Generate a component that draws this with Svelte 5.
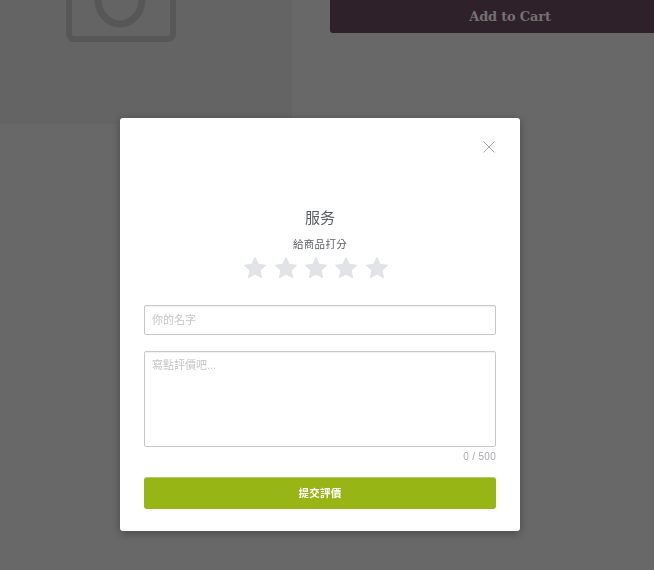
<script>
  const stars = [1, 2, 3, 4, 5];
</script>

<div class="page">
  <div class="left">
    <svg class="photo" width="110" height="44" viewBox="0 0 110 44" fill="none" stroke="#575757" stroke-width="6">
      <rect x="3" y="-32" width="104" height="71" rx="5" />
      <ellipse cx="54" cy="-1" rx="22" ry="25" stroke-width="7" />
    </svg>
  </div>
  <div class="right">
    <button class="cart" tabindex="-1">Add to Cart</button>
  </div>
</div>

<div class="overlay">
  <div class="modal">
    <div class="close-row">
      <svg width="12" height="12" viewBox="0 0 12 12" stroke="#a6a9ad" stroke-width="1" fill="none">
        <path d="M.5.5l11 11M11.5.5l-11 11" />
      </svg>
    </div>
    <h2>服务</h2>
    <p class="hint">給商品打分</p>
    <div class="stars">
      {#each stars as s (s)}
        <svg width="24" height="24" viewBox="0 0 24 24">
          <path fill="#e1e3e6" stroke="#e1e3e6" stroke-width="1.2" stroke-linejoin="round" d="M12 1.6l3.1 6.8 7.3.9-5.4 5 1.5 7.3-6.5-3.7-6.5 3.7L7 14.3l-5.4-5 7.3-.9z" />
        </svg>
      {/each}
    </div>
    <input class="field" placeholder="你的名字" />
    <textarea class="field area" placeholder="寫點評價吧..."></textarea>
    <div class="count">0 / 500</div>
    <button class="submit">提交評價</button>
  </div>
</div>

<style>
  :global(body) {
    margin: 0;
    background: #686868;
    font-family: "Liberation Sans", "Noto Sans CJK TC", sans-serif;
    overflow: hidden;
  }
  .page {
    display: grid;
    grid-template-columns: 292px 1fr;
    height: 570px;
  }
  .left {
    height: 124px;
    background: #646464;
    overflow: hidden;
  }
  .photo {
    display: block;
    margin-left: 66px;
  }
  .right {
    padding-left: 38px;
  }
  .cart {
    display: block;
    width: 100%;
    height: 33px;
    border: 0;
    border-radius: 0 0 0 3px;
    background: #2f2129;
    color: #757173;
    font-family: "DejaVu Serif", serif;
    font-size: 13px;
    font-weight: 700;
    letter-spacing: -0.2px;
    padding: 0 0 0 36px;
  }
  .overlay {
    position: fixed;
    inset: 0;
    padding: 118px 14px 0 0;
    display: flex;
    justify-content: center;
    align-items: flex-start;
  }
  .modal {
    box-sizing: border-box;
    width: 400px;
    height: 413px;
    padding: 0 24px;
    background: #fff;
    border-radius: 3px;
    box-shadow: 0 2px 8px rgba(0, 0, 0, 0.3);
    display: flex;
    flex-direction: column;
  }
  .close-row {
    display: flex;
    justify-content: flex-end;
    height: 82px;
    padding: 23px 1px 0 0;
    box-sizing: border-box;
  }
  h2 {
    margin: 0;
    font-size: 15px;
    line-height: 36px;
    font-weight: 400;
    color: #5a5d63;
    text-align: center;
  }
  .hint {
    margin: 0;
    font-size: 10.5px;
    line-height: 16px;
    color: #5a5d63;
    text-align: center;
    letter-spacing: 0.3px;
  }
  .stars {
    display: flex;
    justify-content: center;
    gap: 6.3px;
    height: 45px;
    padding: 4px 8px 0 0;
    box-sizing: border-box;
    margin-bottom: 8px;
  }
  .field {
    box-sizing: border-box;
    width: 352px;
    height: 30px;
    margin: 0;
    padding: 0 7px;
    border: 1px solid #c8c9cd;
    border-radius: 2px;
    outline: 0;
    box-shadow: inset 0 1px 1px rgba(0, 0, 0, 0.06);
    font-family: inherit;
    font-size: 11px;
    background: #fff;
    display: block;
  }
  .field::placeholder {
    color: #c4c5c8;
    opacity: 1;
  }
  .area {
    height: 96px;
    margin-top: 16px;
    padding-top: 4px;
    resize: none;
  }
  .count {
    font-size: 10px;
    line-height: 12px;
    color: #a9abaf;
    text-align: right;
    margin-top: 4px;
    letter-spacing: 0.3px;
  }
  .submit {
    height: 32px;
    margin-top: 14px;
    border: 0;
    border-top: 1px solid #b5cb68;
    border-radius: 3px;
    background: #97b616;
    color: #fff;
    font-family: inherit;
    font-size: 10.5px;
    font-weight: 700;
    letter-spacing: 0.2px;
    padding: 0 0 3px;
  }
</style>
